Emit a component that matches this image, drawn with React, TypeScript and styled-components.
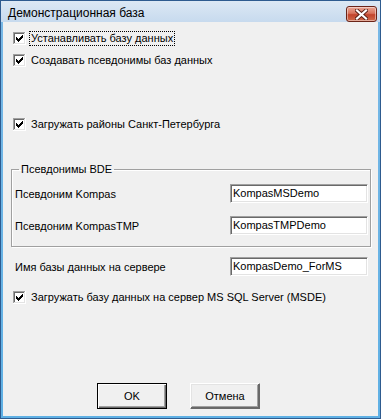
import React from 'react';
import styled, { createGlobalStyle } from 'styled-components';

const GlobalStyle = createGlobalStyle`
  html, body {
    margin: 0;
    padding: 0;
    background: #ffffff;
  }
  * {
    box-sizing: border-box;
  }
`;

const Frame = styled.div`
  width: 381px;
  height: 419px;
  display: flex;
  flex-direction: column;
  border: 1px solid #2e5b8f;
  padding: 0 2px 2px 2px;
  background: linear-gradient(to bottom, #dce8f4 0, #c7daee 21px, #78b8e6 21px, #5fb0e4 100%);
  font-family: 'Liberation Sans', Arial, sans-serif;
`;

const TitleBar = styled.div`
  height: 21px;
  display: flex;
  align-items: center;
  justify-content: space-between;
  padding: 0 1px 0 5px;
`;

const TitleText = styled.span`
  font-size: 12px;
  color: #000;
  margin-top: 2px;
`;

const CloseButton = styled.div`
  width: 31px;
  height: 16px;
  margin-top: 5px;
  border: 1px solid #6b2418;
  border-radius: 3px;
  background: linear-gradient(to bottom, #eaa795 0%, #d8735c 45%, #c2432b 55%, #cf6a4a 100%);
  box-shadow: inset 0 0 0 1px rgba(255, 255, 255, 0.45);
  display: flex;
  align-items: center;
  justify-content: center;
`;

const Client = styled.div`
  flex: 1;
  background: #f0f0f0;
  display: flex;
  flex-direction: column;
  padding: 10px 7px 7px 8px;
  font-size: 11px;
  color: #000;
`;

const CheckRow = styled.label<{ $top: number }>`
  display: flex;
  align-items: center;
  height: 13px;
  margin: ${({ $top }) => $top}px 0 0 2px;
`;

const CheckText = styled.span<{ $focused?: boolean }>`
  margin-left: 4px;
  padding: 0 1px;
  line-height: 13px;
  outline: ${({ $focused }) => ($focused ? '1px dotted #000' : 'none')};
  outline-offset: 0;
  white-space: nowrap;
`;

const Group = styled.fieldset`
  margin: 32px 0 0 0;
  padding: 0 2px 11px 3px;
  border: 1px solid #a0a0a0;
  box-shadow: inset 1px 1px 0 #ffffff, 1px 1px 0 #ffffff;
  min-width: 0;
`;

const Legend = styled.legend`
  margin-left: 4px;
  padding: 0 2px;
  font-size: 11px;
  line-height: 13px;
`;

const FieldRow = styled.div<{ $top: number; $inset?: boolean }>`
  display: flex;
  align-items: center;
  justify-content: space-between;
  margin-top: ${({ $top }) => $top}px;
  padding: ${({ $inset }) => ($inset ? '0 3px 0 4px' : '0')};
`;

const FieldLabel = styled.span`
  line-height: 13px;
  padding-top: 2px;
  white-space: nowrap;
`;

const TextBox = styled.div`
  width: 138px;
  height: 19px;
  background: #ffffff;
  border: 1px solid;
  border-color: #a0a0a0 #ffffff #ffffff #a0a0a0;
  box-shadow: inset 1px 1px 0 #696969, inset -1px -1px 0 #e3e3e3;
  padding: 2px 0 0 2px;
  line-height: 13px;
  white-space: nowrap;
  overflow: hidden;
`;

const ButtonRow = styled.div`
  margin-top: auto;
  display: flex;
  gap: 23px;
  padding-left: 86px;
`;

const Button = styled.div<{ $default?: boolean }>`
  width: 70px;
  height: 26px;
  display: flex;
  align-items: center;
  justify-content: center;
  background: #f0f0f0;
  border: 1px solid ${({ $default }) => ($default ? '#000000' : '#ffffff')};
  box-shadow: ${({ $default }) =>
    $default
      ? 'inset 1px 1px 0 #ffffff, inset -1px -1px 0 #696969, inset -2px -2px 0 #a0a0a0'
      : 'inset -1px -1px 0 #696969, inset 1px 1px 0 #e3e3e3, inset -2px -2px 0 #a0a0a0'};
  border-right-color: ${({ $default }) => ($default ? '#000000' : '#696969')};
  border-bottom-color: ${({ $default }) => ($default ? '#000000' : '#696969')};
  font-size: 11px;
`;

const CheckBox = () => (
  <svg width="13" height="13" viewBox="0 0 13 13" shapeRendering="crispEdges">
    <rect x="0" y="0" width="13" height="13" fill="#ffffff" />
    <rect x="0" y="0" width="12" height="1" fill="#a0a0a0" />
    <rect x="0" y="0" width="1" height="12" fill="#a0a0a0" />
    <rect x="1" y="1" width="10" height="1" fill="#696969" />
    <rect x="1" y="1" width="1" height="10" fill="#696969" />
    <rect x="1" y="11" width="11" height="1" fill="#e3e3e3" />
    <rect x="11" y="1" width="1" height="11" fill="#e3e3e3" />
    <path
      d="M9 3h1v1h-1z M8 4h2v1h-2z M3 5h1v1h-1z M7 5h3v1h-3z M3 6h2v1h-2z M6 6h3v1h-3z M3 7h5v1h-5z M4 8h3v1h-3z M5 9h1v1h-1z"
      fill="#000000"
    />
  </svg>
);

const CloseGlyph = () => (
  <svg width="13" height="11" viewBox="0 0 13 11">
    <path d="M2 1.5 L11 9.5 M11 1.5 L2 9.5" stroke="#5a2016" strokeWidth="4" strokeLinecap="square" />
    <path d="M2 1.5 L11 9.5 M11 1.5 L2 9.5" stroke="#ffffff" strokeWidth="2.2" strokeLinecap="square" />
  </svg>
);

const Check = ({ top, text, focused }: { top: number; text: string; focused?: boolean }) => (
  <CheckRow $top={top}>
    <CheckBox />
    <CheckText $focused={focused}>{text}</CheckText>
  </CheckRow>
);

export default function App() {
  return (
    <>
      <GlobalStyle />
      <Frame>
        <TitleBar>
          <TitleText>Демонстрационная база</TitleText>
          <CloseButton>
            <CloseGlyph />
          </CloseButton>
        </TitleBar>
        <Client>
          <Check top={0} text="Устанавливать базу данных" focused />
          <Check top={9} text="Создавать псевдонимы баз данных" />
          <Check top={51} text="Загружать районы Санкт-Петербурга" />

          <Group>
            <Legend>Псевдонимы BDE</Legend>
            <FieldRow $top={8}>
              <FieldLabel>Псевдоним Kompas</FieldLabel>
              <TextBox>KompasMSDemo</TextBox>
            </FieldRow>
            <FieldRow $top={13}>
              <FieldLabel>Псевдоним KompasTMP</FieldLabel>
              <TextBox>KompasTMPDemo</TextBox>
            </FieldRow>
          </Group>

          <FieldRow $top={10} $inset>
            <FieldLabel>Имя базы данных на сервере</FieldLabel>
            <TextBox>KompasDemo_ForMS</TextBox>
          </FieldRow>

          <Check top={15} text="Загружать базу данных на сервер MS SQL Server (MSDE)" />

          <ButtonRow>
            <Button $default>OK</Button>
            <Button>Отмена</Button>
          </ButtonRow>
        </Client>
      </Frame>
    </>
  );
}
